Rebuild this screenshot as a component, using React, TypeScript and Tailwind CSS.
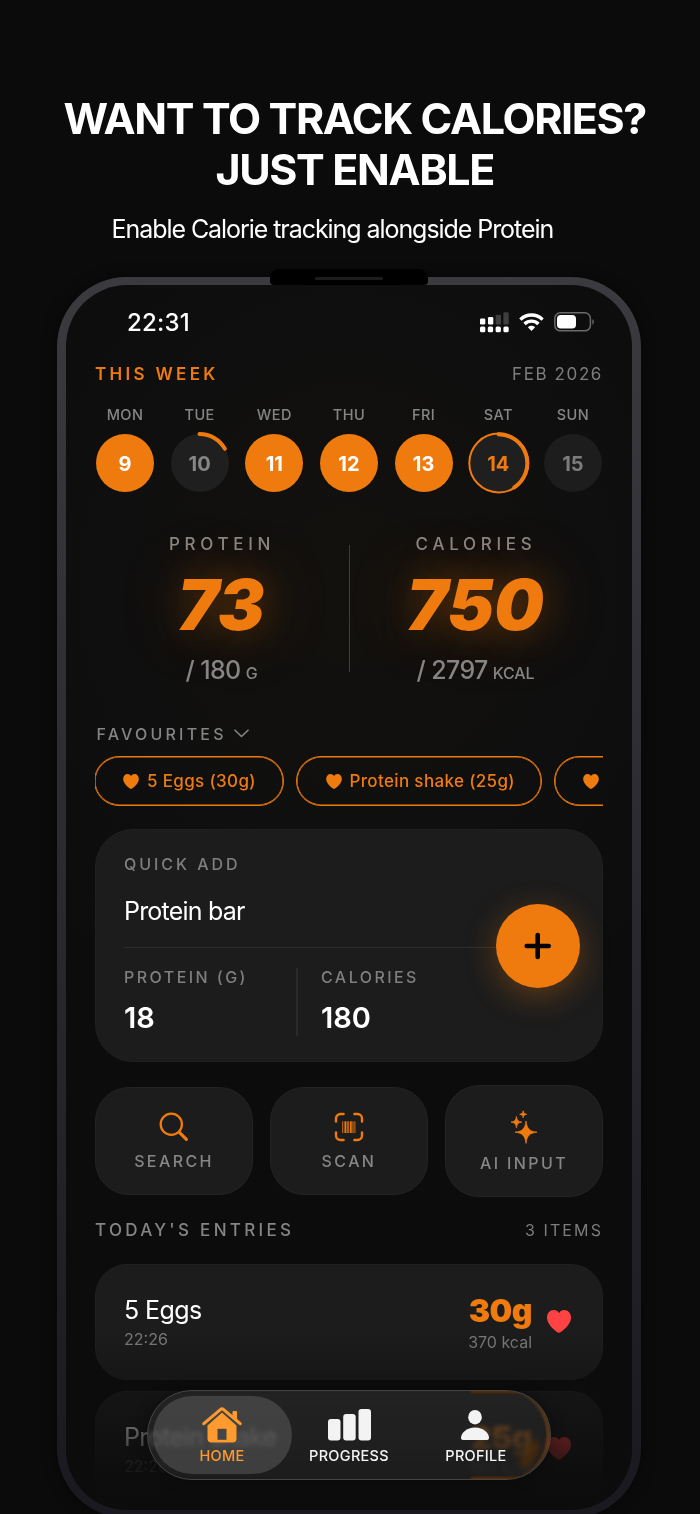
import type { ReactNode } from "react"

const ORANGE = "#ef7b0e"

type Day = {
  label: string
  date: number
  state: "done" | "idle" | "partial" | "today"
}

const DAYS: Day[] = [
  { label: "MON", date: 9, state: "done" },
  { label: "TUE", date: 10, state: "partial" },
  { label: "WED", date: 11, state: "done" },
  { label: "THU", date: 12, state: "done" },
  { label: "FRI", date: 13, state: "done" },
  { label: "SAT", date: 14, state: "today" },
  { label: "SUN", date: 15, state: "idle" },
]

const DAY_STYLES = {
  done: "bg-[#ef7b0e] text-white",
  partial: "bg-[#1f1f1f] text-[#868686]",
  today: "bg-[#1f1f1f] text-[#ef7b0e]",
  idle: "bg-[#1d1d1d] text-[#7c7c7c]",
}

function HeartIcon({ className }: { className?: string }) {
  return (
    <svg viewBox="0 0 24 23" className={className} fill="currentColor">
      <path d="M12 23C11 23 0 15.8 0 7.6 0 3.2 2.9 0 6.7 0 9 0 11 1.2 12 3.2 13 1.2 15 0 17.3 0 21.1 0 24 3.2 24 7.6 24 15.8 13 23 12 23Z" />
    </svg>
  )
}

function SignalIcon() {
  return (
    <svg width="29" height="21" viewBox="0 0 29 21" fill="#fff">
      <rect x="0" y="6.5" width="5.3" height="6" rx="1.3" />
      <rect x="8" y="5" width="5.3" height="7.5" rx="1.3" />
      <rect x="15.7" y="2.7" width="5.3" height="9.8" rx="1.3" fill="#3f3f3f" />
      <rect x="23.4" y="0.3" width="5.3" height="12.2" rx="1.3" fill="#3f3f3f" />
      <rect x="0" y="14.5" width="5.3" height="5.8" rx="1.5" />
      <rect x="7.8" y="14.5" width="5.3" height="5.8" rx="1.5" />
      <rect x="15.6" y="14.5" width="5.3" height="5.8" rx="1.5" />
      <rect x="23.4" y="14.5" width="5.3" height="5.8" rx="1.5" />
    </svg>
  )
}

function WifiIcon() {
  return (
    <svg width="25" height="19" viewBox="0 0 25 19" fill="none" stroke="#fff" strokeWidth="3.4">
      <path d="M1.4 6.6a15.8 15.8 0 0 1 22.2 0" />
      <path d="M5.6 11a9.8 9.8 0 0 1 13.8 0" />
      <path d="M8.9 14.2a5.2 5.2 0 0 1 7.2 0L12.5 17.9z" fill="#fff" stroke="none" />
    </svg>
  )
}

function BatteryIcon() {
  return (
    <svg width="41" height="20" viewBox="0 0 41 20" fill="none">
      <rect x="0.8" y="0.8" width="35.6" height="18" rx="5.6" stroke="#6b6b6b" strokeWidth="1.5" />
      <rect x="3" y="3" width="19" height="13.6" rx="3.8" fill="#fff" />
      <path d="M38.4 7.2c2 .8 2 4.6 0 5.4z" fill="#6b6b6b" />
    </svg>
  )
}

function DayCircle({ day }: { day: Day }) {
  return (
    <div className="flex w-[58px] flex-col items-center">
      <span className="h-3.5 text-[14.5px] leading-[15px] font-medium tracking-[0.4px] text-[#858585]">{day.label}</span>
      <div
        className={`relative mt-[13px] flex size-[58px] items-center justify-center rounded-full pt-px text-[20px] leading-none font-bold ${DAY_STYLES[day.state]}`}
      >
        {day.date}
        {(day.state === "partial" || day.state === "today") && (
          <svg className="absolute -inset-1 size-[66px]" viewBox="0 0 66 66" fill="none" stroke={ORANGE}>
            {day.state === "today" && <circle cx="33.7" cy="33" r="29.4" strokeWidth="2" />}
            <path
              d={day.state === "today" ? "M33.5 4.2a29 29 0 0 1 15.8 53.2" : "M32.5 4a29 29 0 0 1 25.4 14.8"}
              strokeWidth="4"
              strokeLinecap="round"
            />
          </svg>
        )}
      </div>
    </div>
  )
}

type StatProps = { label: string; value: string; goal: string; unit: string }

function Stat({ label, value, goal, unit }: StatProps) {
  return (
    <div className="flex w-[254px] flex-col items-center">
      <span className="h-4 text-[17px] leading-4 font-medium tracking-[4.7px] text-[#8b8781]">{label}</span>
      <span className="mt-[18px] h-[70px] pr-0.5 text-[70px] leading-[70px] font-black italic text-[#ef7b0e] [text-shadow:0_0_36px_rgba(239,123,14,0.3),0_0_70px_rgba(239,123,14,0.25)]">
        {value}
      </span>
      <span className="mt-[17.5px] h-[26px] pr-px text-[25px] leading-[26px] font-medium tracking-[-0.6px] whitespace-pre text-[#868584]">
        / {goal}
        <span className="ml-[5px] text-[16px] tracking-[-0.1px]">{unit}</span>
      </span>
    </div>
  )
}

function FavouritePill({ text, className }: { text: string; className: string }) {
  return (
    <div
      className={`flex h-[50px] shrink-0 items-center rounded-full border border-[#ef7b0e] text-[#ef7b0e] shadow-[inset_0_0_0_0.6px_#ef7b0e] ${className}`}
    >
      <HeartIcon className="h-[15px] w-4 shrink-0" />
      <span className="ml-2 text-[17px] leading-none font-medium tracking-[0.35px] whitespace-nowrap">{text}</span>
    </div>
  )
}

function ActionButton({ label, icon, className }: { label: string; icon: ReactNode; className: string }) {
  return (
    <div
      className={`flex w-[158px] flex-col items-center gap-[11px] rounded-[34px] border border-[#232323] bg-[#1c1c1c] pt-6 ${className}`}
    >
      {icon}
      <span className="text-[16px] leading-4 font-medium tracking-[2.4px] text-[#868686]">{label}</span>
    </div>
  )
}

function SearchIcon() {
  return (
    <svg className="-ml-px" width="30" height="30" viewBox="0 0 30 30" fill="none" stroke={ORANGE} strokeLinecap="round">
      <circle cx="12.3" cy="12.3" r="10.6" strokeWidth="2.3" />
      <path d="M20.4 20.4l7 7" strokeWidth="3.2" />
    </svg>
  )
}

function ScanIcon() {
  return (
    <svg width="30" height="30" viewBox="0 0 30 30" fill="none" stroke={ORANGE}>
      <path
        d="M2 9.6V6.4A4.4 4.4 0 0 1 6.4 2h3.2M20.4 2h3.2A4.4 4.4 0 0 1 28 6.4v3.2M28 20.4v3.2a4.4 4.4 0 0 1-4.4 4.4h-3.2M9.6 28H6.4A4.4 4.4 0 0 1 2 23.6v-3.2"
        strokeWidth="2.4"
        strokeLinecap="round"
      />
      <path d="M8.7 9.3v11.8M20.9 9.3v11.8M14.7 9.3v11.8" strokeWidth="0.9" />
      <path d="M11.3 9.3v11.8M16.9 9.3v11.8" strokeWidth="1.7" />
      <path d="M13.2 9.3v11.8M19 9.3v11.8" strokeWidth="1" />
    </svg>
  )
}

function SparklesIcon() {
  return (
    <svg width="28" height="34" viewBox="0 0 28 34" fill={ORANGE} stroke={ORANGE} strokeWidth="0.8" strokeLinejoin="round">
      <path d="M16 11c.9 7.6 3.6 10.6 11 11.2-7.4.6-10.1 3.6-11 11.2-.9-7.6-3.6-10.6-11-11.2 7.4-.6 10.1-3.6 11-11.2z" />
      <path d="M6.4 6.5c.5 3.8 1.800 5.2 5.4 5.6-3.6.4-4.9 1.8-5.4 5.6-.5-3.8-1.8-5.2-5.4-5.6 3.6-.4 4.9-1.8 5.4-5.6z" />
      <path d="M13.2.8c.4 2.4 1.2 3.1 3.5 3.5-2.3.4-3.1 1.100-3.5 3.5-.4-2.4-1.2-3.1-3.5-3.5 2.3-.4 3.1-1.1 3.5-3.5z" />
    </svg>
  )
}

type EntryProps = { name: string; time: string; grams: string; kcal: string }

function EntryCard({ name, time, grams, kcal }: EntryProps) {
  return (
    <div className="flex h-[115.5px] items-center rounded-[32px] border border-[#202020] bg-[#1c1c1c] px-7">
      <div className="flex flex-1 flex-col">
        <span className="text-[25px] leading-[26px] tracking-[-0.6px] text-white">{name}</span>
        <span className="mt-2 text-[16px] leading-4 text-[#7e7e7e]">{time}</span>
      </div>
      <div className="flex flex-col items-end pt-0.5">
        <span className="text-[32px] leading-8 font-black tracking-[-0.5px] text-[#ef7b0e]">{grams}</span>
        <span className="mt-[7px] text-[16px] leading-4 text-[#7e7e7e]">{kcal}</span>
      </div>
      <HeartIcon className="mr-[3px] ml-[15px] h-[23px] w-6 text-[#ff4345]" />
    </div>
  )
}

function HomeIcon() {
  return (
    <svg width="40" height="36" viewBox="0 0 40 36" fill="#ff9a2e">
      <path d="M5.5 18.5 20 5.5l14.5 13v13a4 4 0 0 1-4 4h-21a4 4 0 0 1-4-4z" />
      <rect x="15.5" y="21.8" width="9" height="11" fill="#454545" />
      <path d="M1.8 16.7 18.7 2.3a2 2 0 0 1 2.6 0l16.9 14.4" fill="none" stroke="#454545" strokeWidth="6.2" />
      <path d="M31 4.5h3.5V14L31 11z" stroke="#ff9a2e" strokeWidth="1" strokeLinejoin="round" />
      <path
        d="M1.8 16.7 18.7 2.3a2 2 0 0 1 2.6 0l16.9 14.4"
        fill="none"
        stroke="#ff9a2e"
        strokeWidth="3"
        strokeLinecap="round"
      />
    </svg>
  )
}

function NavBar() {
  return (
    <nav className="absolute top-[1105px] left-[81px] h-[90px] w-[404px] overflow-hidden rounded-full border border-[#454545] bg-[#262626]/50 shadow-[0_0_14px_rgba(0,0,0,0.4)] backdrop-blur-[2px] backdrop-brightness-150">
      {/* light bent around the glass edge */}
      <div className="absolute -top-px left-[322px] h-[3px] w-14 rounded-full bg-[#5c3003] blur-[1px]" />
      <div className="absolute -bottom-px left-[322px] h-[3px] w-14 rounded-full bg-[#5c3003] blur-[1px]" />
      <div className="absolute top-0 right-0 h-full w-[50px] rounded-r-full border-r-[3px] border-[#8a4a0c]/70 blur-[1px]" />
      <div className="absolute top-[48px] left-[376px] h-[30px] w-3 rotate-30 rounded-full bg-[#5c3003]/60 blur-[3px]" />
      <div className="relative flex h-full pt-[5px] pl-[4.5px] text-[14.5px] leading-none font-medium tracking-[0.3px] text-[#f3f3f3]">
        <div className="flex h-[78px] w-[139px] flex-col items-center rounded-full bg-[#686868]/45 pt-[10.5px] text-[#ff9a2e]">
          <HomeIcon />
          <span className="mt-1.5">HOME</span>
        </div>
        <div className="flex w-[115px] flex-col items-center pt-[12.5px]">
          <svg width="43" height="32" viewBox="0 0 43 32" fill="#f3f3f3">
            <rect x="0" y="10" width="12.5" height="21.5" rx="3" />
            <rect x="15.2" y="5" width="12.5" height="26.5" rx="3" />
            <rect x="30.5" y="0" width="12.5" height="31.5" rx="3" />
          </svg>
          <span className="mt-2">PROGRESS</span>
        </div>
        <div className="flex w-[139px] flex-col items-center pt-[13.5px]">
          <svg className="-ml-0.5" width="28" height="31" viewBox="0 0 28 31" fill="#f3f3f3">
            <ellipse cx="14" cy="7.2" rx="6.8" ry="7.2" />
            <path d="M2 30c-1.2 0-2-.8-2-2 0-5 5.500-10.500 14-10.500S28 23 28 28c0 1.200-.8 2-2 2z" />
          </svg>
          <span className="mt-2">PROFILE</span>
        </div>
      </div>
    </nav>
  )
}

export default function App() {
  return (
    <div className="flex h-[1514px] w-[700px] flex-col overflow-hidden bg-[#0b0b0b] font-['Inter',sans-serif] text-white">
      <h1 className="mt-[93px] ml-[9.5px] text-center text-[43px] leading-[51px] font-bold tracking-[-1.35px]">
        WANT TO TRACK CALORIES?
        <br />
        JUST ENABLE
      </h1>
      <p className="mt-[21px] ml-[111.5px] text-[25px] leading-[26px] tracking-[-1.06px] whitespace-nowrap">
        Enable Calorie tracking alongside Protein
      </p>

      <div className="relative mt-[35px] ml-[57px] h-[1240.5px] w-[584px] shrink-0 rounded-[70px] bg-linear-to-b from-[#3b3a3f] via-[#2a2930] to-[#1a191f] px-[9px] pt-2 pb-2 shadow-[0_0_14px_rgba(0,0,0,0.5)]">
        <div className="absolute -top-2 left-[213px] z-10 flex h-4 w-[158px] justify-center rounded-t-[9px] rounded-b-[4px] bg-black pt-2">
          <div className="h-[2.5px] w-[68px] rounded-full bg-[#1d1d1d]" />
        </div>

        <div className="relative h-full overflow-hidden rounded-[61px] bg-[#0c0c0c] bg-[radial-gradient(ellipse_420px_460px_at_50%_300px,#13110e,#0f0f0f_60%,#0c0c0c)] px-[29px] pt-[25px]">
          <div className="flex h-6 items-center pr-2 pl-8">
            <span className="flex-1 text-[24px] leading-[25px] font-medium tracking-[0.2px]">22:31</span>
            <div className="flex items-center">
              <SignalIcon />
              <div className="ml-[10px]">
                <WifiIcon />
              </div>
              <div className="ml-[10.5px]">
                <BatteryIcon />
              </div>
            </div>
          </div>

          <div className="mt-[30.5px] flex h-5 items-center justify-between text-[17px] leading-[19px]">
            <span className="font-semibold tracking-[3.3px] text-[#ef7b0e]">THIS WEEK</span>
            <span className="tracking-[1.6px] text-[#7d7d7d]">FEB 2026</span>
          </div>

          <div className="mt-[22.5px] flex justify-between px-px">
            {DAYS.map((day) => (
              <DayCircle key={day.label} day={day} />
            ))}
          </div>

          <div className="mt-[43.5px] flex h-[147.5px]">
            <Stat label="PROTEIN" value="73" goal="180" unit="G" />
            <div className="-mx-[0.5px] mt-[9.5px] h-[127px] w-px bg-[#3d3c3b]" />
            <Stat label="CALORIES" value="750" goal="2797" unit="KCAL" />
          </div>

          <div className="mt-[42.5px] flex h-4 items-center pl-[1.5px]">
            <span className="text-[16px] leading-4 font-medium tracking-[3.2px] text-[#858585]">FAVOURITES</span>
            <svg className="ml-[7px]" width="15" height="9" viewBox="0 0 15 9" fill="none" stroke="#858585">
              <path d="M1 1.2l6.5 6.3L14 1.2" strokeWidth="1.6" strokeLinecap="round" strokeLinejoin="round" />
            </svg>
          </div>

          <div className="mt-[14.5px] flex gap-3 overflow-hidden">
            <FavouritePill text="5 Eggs (30g)" className="-ml-px w-[190px] pl-7" />
            <FavouritePill text="Protein shake (25g)" className="w-[246px] pl-[28.5px]" />
            <FavouritePill text="" className="w-[200px] pl-7" />
          </div>

          <div className="relative mt-[23px] h-[233px] rounded-[38px] border border-[#202020] bg-[#1c1c1c] px-7 pt-[26px]">
            <div className="text-[16px] leading-4 font-medium tracking-[2.95px] text-[#7f7f7f]">QUICK ADD</div>
            <div className="mt-[26px] text-[25px] leading-[26px] tracking-[-0.8px]">Protein bar</div>
            <div className="mt-[23px] h-px bg-[#2f2f2f]" />
            <div className="mt-5 flex">
              <div className="w-[172px]">
                <div className="mt-px text-[16px] leading-4 font-medium tracking-[2.45px] text-[#7f7f7f]">PROTEIN (G)</div>
                <div className="mt-[18px] text-[29px] leading-[30px] font-semibold">18</div>
              </div>
              <div className="h-[68px] w-0.5 bg-[#2a2a2a]" />
              <div className="pl-[23px]">
                <div className="mt-px text-[16px] leading-4 font-medium tracking-[2.45px] text-[#7f7f7f]">CALORIES</div>
                <div className="mt-[18px] text-[29px] leading-[30px] font-semibold">180</div>
              </div>
            </div>
            <button className="absolute top-[73.5px] right-[22px] flex size-[84px] items-center justify-center rounded-full bg-[#ef7b0e] shadow-[0_8px_32px_rgba(239,123,14,0.32)]">
              <svg width="28" height="28" viewBox="0 0 28 28" stroke="#000" strokeWidth="4.6" strokeLinecap="round">
                <path d="M13.7 3v22M2.7 14h22" />
              </svg>
            </button>
          </div>

          <div className="mt-[23px] flex h-28 items-center justify-between">
            <ActionButton label="SEARCH" className="h-[108px]" icon={<SearchIcon />} />
            <ActionButton label="SCAN" className="h-[108px]" icon={<ScanIcon />} />
            <ActionButton label="AI INPUT" className="h-28" icon={<SparklesIcon />} />
          </div>

          <div className="mt-6 flex h-[18px] items-center justify-between leading-[18px]">
            <span className="text-[17px] font-medium tracking-[3.3px] text-[#858585]">TODAY'S ENTRIES</span>
            <span className="text-[16px] tracking-[2.1px] text-[#7d7d7d]">3 ITEMS</span>
          </div>

          <div className="mt-[25px] flex flex-col gap-[11.5px]">
            <EntryCard name="5 Eggs" time="22:26" grams="30g" kcal="370 kcal" />
            <EntryCard name="Protein shake" time="22:26" grams="25g" kcal="180 kcal" />
          </div>

          <div className="pointer-events-none absolute inset-x-0 bottom-0 h-[180px] bg-linear-to-b from-[#0c0c0c]/0 via-[#0c0c0c]/50 via-40% to-[#0c0c0c] to-90%" />
          <NavBar />
        </div>
      </div>
    </div>
  )
}
